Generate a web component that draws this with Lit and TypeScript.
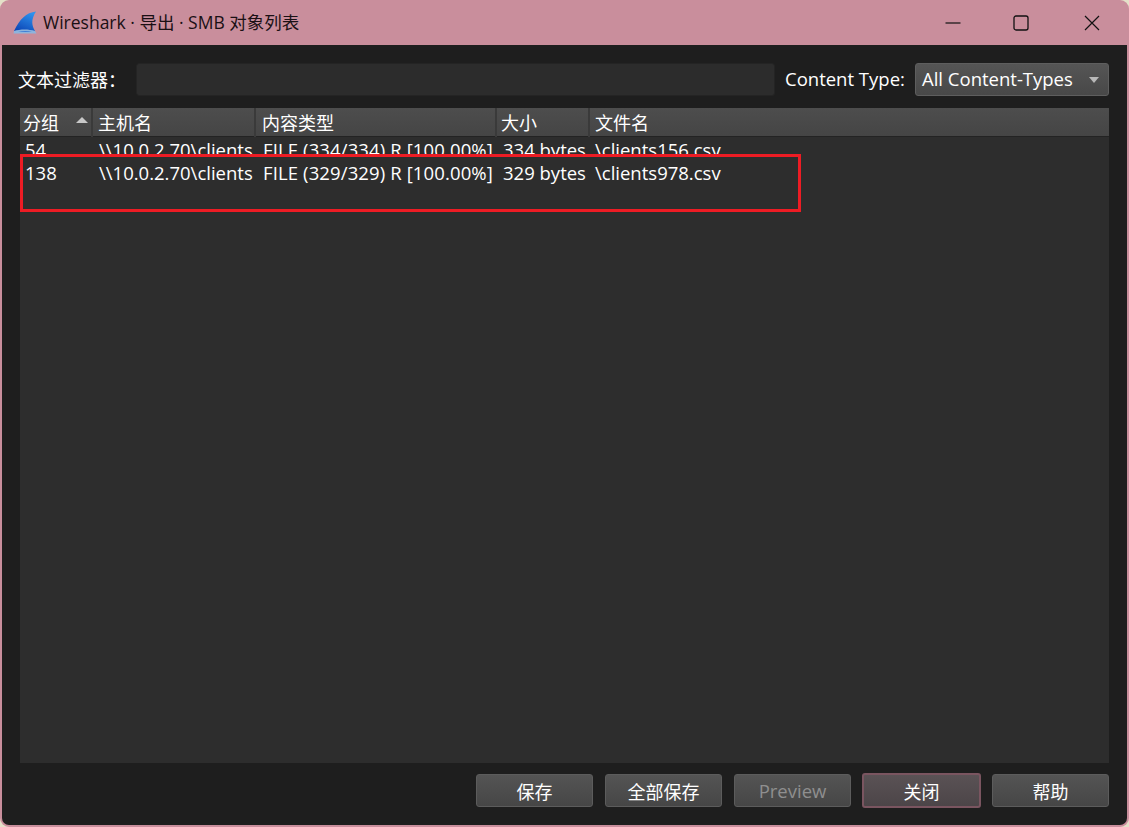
import { LitElement, html, css } from "lit";
import { customElement } from "lit/decorators.js";

const COLS = ["分组", "主机名", "内容类型", "大小", "文件名"];
const ROWS = [
  ["54", "\\\\10.0.2.70\\clients", "FILE (334/334) R [100.00%]", "334 bytes", "\\clients156.csv"],
  ["138", "\\\\10.0.2.70\\clients", "FILE (329/329) R [100.00%]", "329 bytes", "\\clients978.csv"],
];
const BUTTONS = [
  { t: "保存", c: "" },
  { t: "全部保存", c: "" },
  { t: "Preview", c: "disabled" },
  { t: "关闭", c: "focus" },
  { t: "帮助", c: "" },
];
const GRIP = [[15, 0], [10, 5], [15, 5], [5, 10], [10, 10], [15, 10], [0, 15], [5, 15], [10, 15], [15, 15]];

@customElement("app-root")
export class AppRoot extends LitElement {
  static styles = css`
    :host {
      display: block;
      width: 1129px;
      height: 827px;
      background: #e4e0c8;
      font-family: "Open Sans", "Noto Sans CJK SC", sans-serif;
      font-size: 18.5px;
      color: #fff;
      overflow: hidden;
    }
    .win {
      box-sizing: border-box;
      height: 827px;
      border-radius: 9px;
      background: #c98e9c;
      padding: 0 2px 2px;
      display: flex;
      flex-direction: column;
      overflow: hidden;
    }
    .title {
      height: 45px;
      flex: none;
      display: flex;
      align-items: center;
      padding-left: 11px;
      color: #1a1014;
      font-size: 17.5px;
    }
    .title .logo { width: 24px; height: 24px; margin-right: 6px; }
    .title .name { flex: 1; position: relative; top: -1px; }
    .ctl { height: 45px; display: flex; align-items: center; justify-content: center; }
    .ctl svg { width: 16px; height: 16px; }
    .ctl.min { width: 64px; }
    .ctl.max { width: 72px; }
    .ctl.close { width: 70px; }
    .body {
      flex: 1;
      background: #1e1e1e;
      border-radius: 0 0 7px 7px;
      display: flex;
      flex-direction: column;
      padding: 18px 18px 0 16px;
      position: relative;
      min-height: 0;
    }
    .filter { display: flex; align-items: center; height: 33px; }
    .filter .lab { width: 118px; font-size: 18px; }
    .filter .lab, .filter .ct, .combo span { position: relative; top: -1px; }
    .input {
      width: 639px;
      height: 33px;
      box-sizing: border-box;
      background: #2c2c2c;
      border: 1px solid #242424;
      border-radius: 3px;
    }
    .filter .ct { margin-left: 10px; width: 130px; }
    .combo {
      width: 194px;
      height: 33px;
      box-sizing: border-box;
      border: 1px solid #5e5e5e;
      border-radius: 3px;
      background: linear-gradient(#555, #484848);
      display: flex;
      align-items: center;
      justify-content: space-between;
      padding: 0 9px 0 6px;
    }
    .arrow { width: 0; height: 0; border: 5.5px solid transparent; border-top: 6px solid #b8b8b8; border-bottom: 0; }
    .table {
      margin: 12px 0 0 2px;
      height: 655px;
      width: 1089px;
      flex: none;
      background: #2d2d2d;
      position: relative;
    }
    .head, .row { display: grid; grid-template-columns: 73px 163px 241px 93px 1fr; }
    .head {
      height: 29px;
      background: linear-gradient(#4d4d4d, #454545);
      border-bottom: 1px solid #232323;
      box-sizing: border-box;
      font-size: 18px;
    }
    .hc {
      border-right: 2px solid #3a3a3a;
      padding: 1px 3px 0 5px;
      line-height: 28px;
      display: flex;
      justify-content: space-between;
      align-items: center;
      box-sizing: border-box;
    }
    .hc.first { padding-left: 3px; }
    .hc:nth-child(3) { padding-left: 6px; }
    .hc:nth-child(4) { padding-left: 4px; }
    .hc:last-child { border-right: 0; }
    .up { width: 0; height: 0; border: 6px solid transparent; border-bottom: 6px solid #c8c8c8; border-top: 0; margin-bottom: 6px; }
    .row { height: 18px; overflow: hidden; }
    .row.second { height: 38px; padding-top: 6px; }
    .row span { white-space: nowrap; overflow: hidden; line-height: 24px; padding-left: 7px; box-sizing: border-box; }
    .row:not(.second) span { line-height: 26px; }
    .row span:first-child { padding-left: 5px; }
    .row span:nth-child(2), .row span:nth-child(4) { padding-left: 6px; }
    .row span:nth-child(3) { letter-spacing: 0.12px; }
    .row span:last-child { padding-left: 5px; }
    .mark {
      position: absolute;
      left: 0;
      top: 46px;
      width: 781px;
      height: 58px;
      box-sizing: border-box;
      border: 3px solid #ed1c24;
      pointer-events: none;
    }
    .foot {
      flex: 1;
      display: flex;
      justify-content: flex-end;
      gap: 12px;
      padding-top: 11px;
      font-size: 18px;
    }
    .btn {
      width: 117px;
      height: 33px;
      box-sizing: border-box;
      border: 1px solid #5c5c5c;
      border-radius: 3px;
      background: linear-gradient(#545454, #464646);
      display: flex;
      align-items: center;
      justify-content: center;
    }
    .btn.disabled { color: #8f8f8f; font-size: 18.5px; }
    .btn.focus {
      border: 2px solid #7a5560;
      background: linear-gradient(#5a5255, #4c4548);
      height: 35px;
      width: 119px;
      margin: -1px;
    }
    .grip { position: absolute; right: 1px; bottom: 0; width: 18px; height: 18px; fill: #5a5a5a; }
  `;

  render() {
    return html`
      <div class="win">
        <div class="title">
          <svg class="logo" viewBox="0 0 24 24">
            <defs>
              <linearGradient id="g" x1="0.7" y1="0" x2="0.2" y2="1">
                <stop offset="0" stop-color="#2f93ee"/>
                <stop offset="1" stop-color="#0c46b6"/>
              </linearGradient>
            </defs>
            <path d="M23 0.5 C13 1.5 7 8 1 20 L22 20 C19 15 17.5 9 23 0.5 Z" fill="url(#g)"/>
            <path d="M1 20 C7 18 16 18 22 20 L23.5 22.5 L0.5 22.5 Z" fill="#8db4dd"/>
            <path d="M5 21 C10 19.5 15 19.5 19 21 Z" fill="#3f7fd6"/>
          </svg>
          <span class="name">Wireshark · 导出 · SMB 对象列表</span>
          <div class="ctl min"><svg viewBox="0 0 16 16"><path d="M0.5 8h15" stroke="#111" stroke-width="1.2"/></svg></div>
          <div class="ctl max"><svg viewBox="0 0 16 16"><rect x="1" y="1" width="14" height="14" rx="2" fill="none" stroke="#111" stroke-width="1.3"/></svg></div>
          <div class="ctl close"><svg viewBox="0 0 16 16"><path d="M1 1L15 15M15 1L1 15" stroke="#111" stroke-width="1.2"/></svg></div>
        </div>
        <div class="body">
          <div class="filter">
            <span class="lab">文本过滤器：</span>
            <div class="input"></div>
            <span class="ct">Content Type:</span>
            <div class="combo"><span>All Content-Types</span><i class="arrow"></i></div>
          </div>
          <div class="table">
            <div class="head">
              ${COLS.map((c, i) => html`<div class="hc ${i === 0 ? "first" : ""}"><span>${c}</span>${i === 0 ? html`<i class="up"></i>` : ""}</div>`)}
            </div>
            ${ROWS.map((r, i) => html`<div class="row ${i === 1 ? "second" : ""}">${r.map((v) => html`<span>${v}</span>`)}</div>`)}
            <div class="mark"></div>
          </div>
          <div class="foot">
            ${BUTTONS.map((b) => html`<div class="btn ${b.c}">${b.t}</div>`)}
          </div>
          <svg class="grip" viewBox="0 0 18 18">
            ${GRIP.map(([x, y]) => html`<rect x=${x} y=${y} width="3" height="3"></rect>`)}
          </svg>
        </div>
      </div>
    `;
  }
}
